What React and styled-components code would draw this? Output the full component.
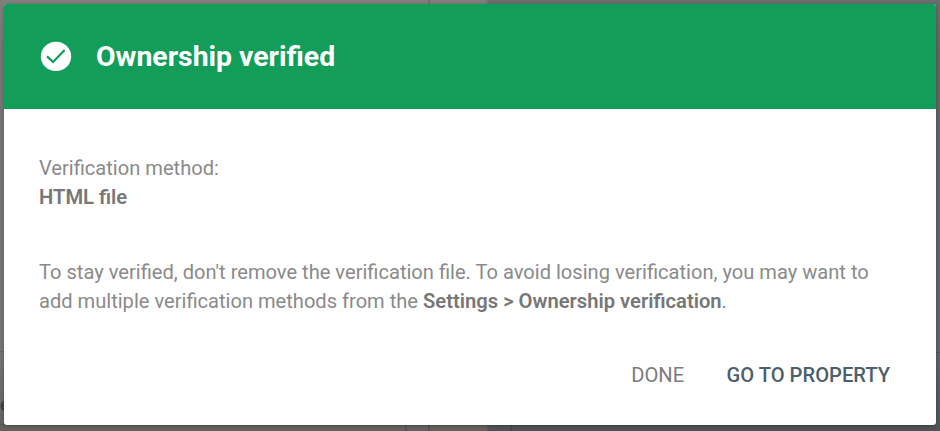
import React from 'react';
import styled, { createGlobalStyle } from 'styled-components';

const GlobalStyle = createGlobalStyle`
  * { box-sizing: border-box; }
  body { margin: 0; overflow: hidden; font-family: Roboto, sans-serif; }
`;

const Backdrop = styled.main`
  position: relative;
  display: flex;
  width: 940px;
  height: 431px;
  padding: 4px 4px 6px;
  overflow: hidden;
  background:
    linear-gradient(rgba(0, 0, 0, 0) 0, rgba(0, 0, 0, 0.09) 50px, rgba(0, 0, 0, 0.09) 350px, rgba(0, 0, 0, 0.24) 431px),
    linear-gradient(90deg, #807f7e 0 485px, #686d70 489px);
`;

const Divider = styled.span`
  position: absolute;
  left: ${(p) => p.$x}px;
  top: ${(p) => p.$y}px;
  width: ${(p) => p.$w}px;
  height: ${(p) => p.$h}px;
  background: rgba(0, 0, 0, 0.14);
`;

const PageLetter = styled.span`
  position: absolute;
  left: 0;
  top: 395px;
  font-size: 19px;
  line-height: 20px;
  color: #373737;
`;

const Dialog = styled.section`
  position: relative;
  display: flex;
  flex-direction: column;
  width: 932px;
  height: 421px;
  border-radius: 3px;
  overflow: hidden;
  background: #fff;
  box-shadow: 0 1px 3px rgba(0, 0, 0, 0.3);
`;

const Header = styled.header`
  display: flex;
  align-items: center;
  gap: 24px;
  height: 105px;
  padding: 0 36px;
  background: #129d59;
`;

const CheckIcon = styled.svg`
  display: block;
  width: 32px;
  height: 32px;
`;

const Title = styled.h1`
  margin: 0;
  font-size: 28.4px;
  line-height: 36px;
  font-weight: 700;
  color: #fff;
`;

const Body = styled.div`
  display: flex;
  flex-direction: column;
  gap: 47px;
  padding: 45px 35px 0;
  font-size: 20.1px;
  line-height: 28.5px;
  color: #8a8a8a;
`;

const Paragraph = styled.p`
  margin: 0;
`;

const Line = styled.span`
  display: block;
  white-space: nowrap;
`;

const Strong = styled.strong`
  font-size: 20.2px;
  font-weight: 600;
  color: #777;
`;

const Actions = styled.footer`
  display: flex;
  justify-content: flex-end;
  gap: 42.5px;
  margin-top: auto;
  padding: 0 46px 35px 0;
`;

const Action = styled.button`
  padding: 0;
  border: 0;
  background: none;
  font: ${(p) => (p.$primary ? 500 : 400)} 20.15px/30px Roboto, sans-serif;
  color: ${(p) => (p.$primary ? '#4b606a' : '#7c7c7c')};
`;

export default function App() {
  return (
    <>
      <GlobalStyle />
      <Backdrop>
        <Divider $x={428} $y={0} $w={2} $h={431} />
        <Divider $x={405} $y={420} $w={2} $h={11} />
        <Divider $x={510} $y={420} $w={2} $h={11} />
        <Divider $x={0} $y={351} $w={4} $h={1} />
        <Divider $x={936} $y={352} $w={4} $h={1} />
        <Divider $x={0} $y={424} $w={4} $h={1} />
        <PageLetter>e</PageLetter>
        <Dialog role="dialog" aria-labelledby="title">
          <Header>
            <CheckIcon viewBox="0 0 32 32" aria-hidden="true">
              <ellipse cx="16" cy="15.4" rx="15.2" ry="14.7" fill="#fff" />
              <path d="M7 15.4l6.1 5.6L24.6 8.9" fill="none" stroke="#129d59" strokeWidth="2.2" />
            </CheckIcon>
            <Title id="title">Ownership verified</Title>
          </Header>
          <Body>
            <Paragraph>
              <Line>Verification method:</Line>
              <Strong>HTML file</Strong>
            </Paragraph>
            <Paragraph>
              <Line>To stay verified, don't remove the verification file. To avoid losing verification, you may want to</Line>
              <Line>
                add multiple verification methods from the <Strong>Settings &gt; Ownership verification</Strong>.
              </Line>
            </Paragraph>
          </Body>
          <Actions>
            <Action>DONE</Action>
            <Action $primary>GO TO PROPERTY</Action>
          </Actions>
        </Dialog>
      </Backdrop>
    </>
  );
}
